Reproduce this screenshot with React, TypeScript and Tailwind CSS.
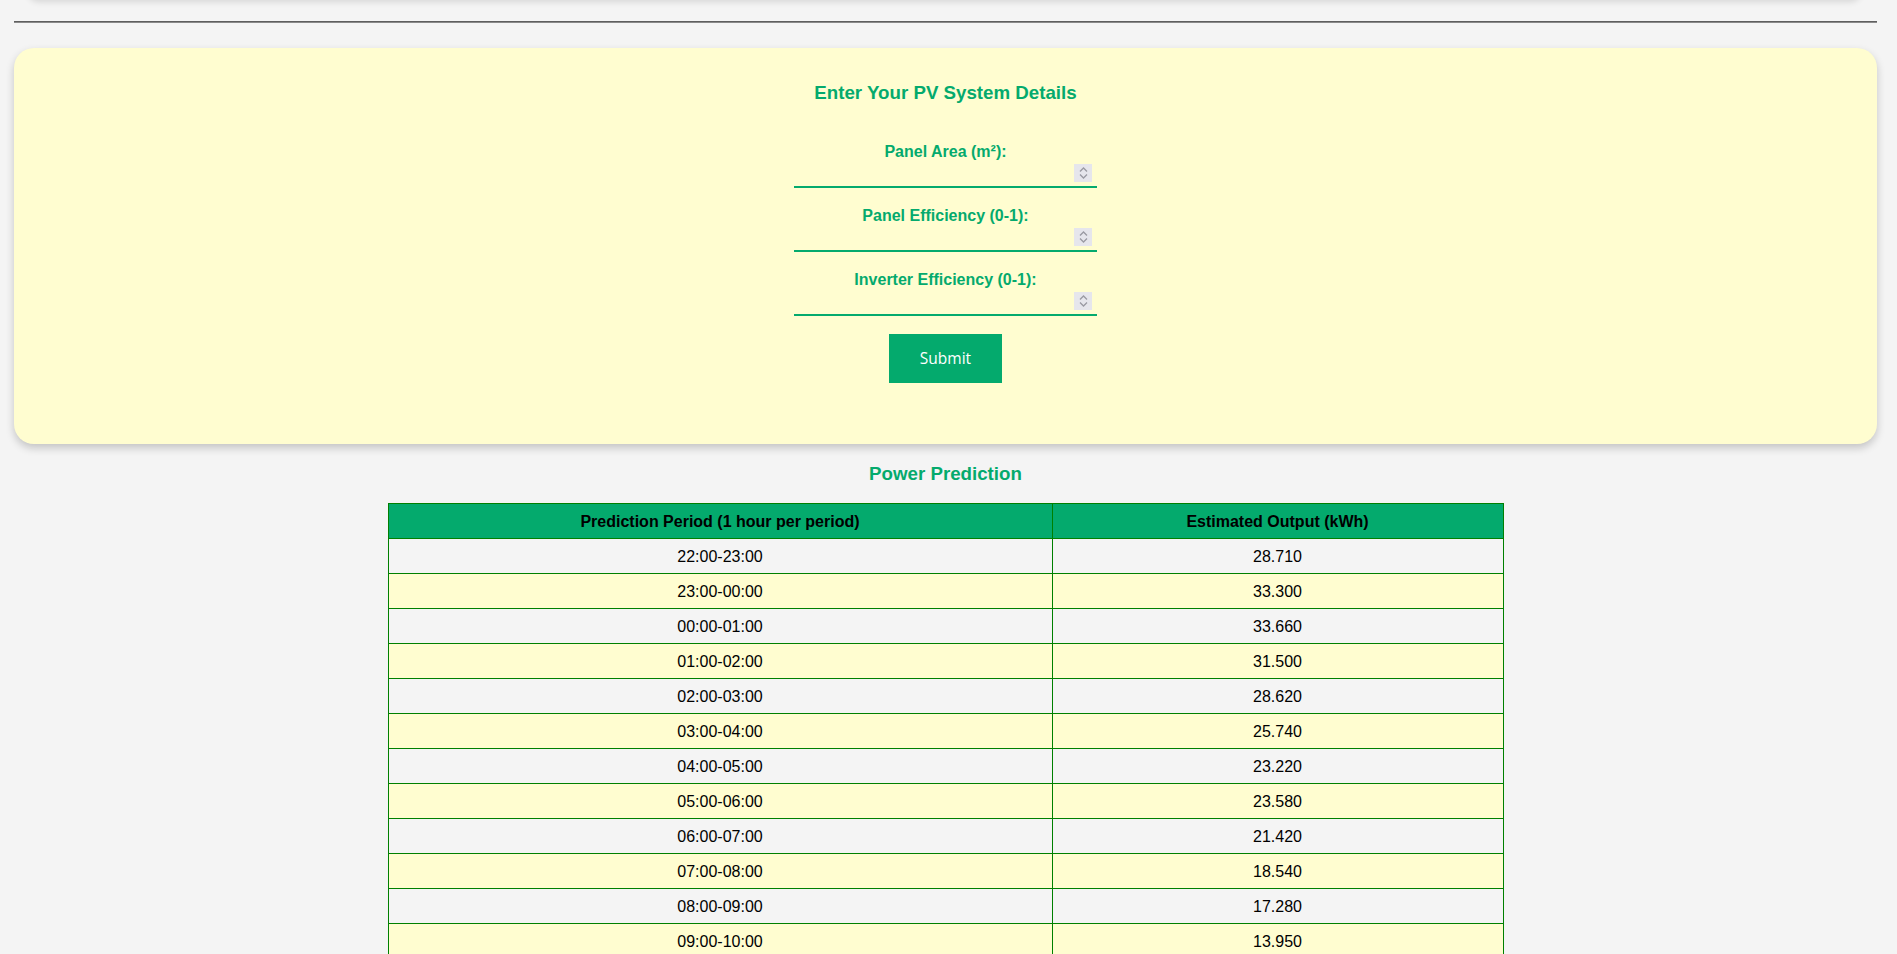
import React from 'react';

const rows: [string, string][] = [
  ['22:00-23:00', '28.710'],
  ['23:00-00:00', '33.300'],
  ['00:00-01:00', '33.660'],
  ['01:00-02:00', '31.500'],
  ['02:00-03:00', '28.620'],
  ['03:00-04:00', '25.740'],
  ['04:00-05:00', '23.220'],
  ['05:00-06:00', '23.580'],
  ['06:00-07:00', '21.420'],
  ['07:00-08:00', '18.540'],
  ['08:00-09:00', '17.280'],
  ['09:00-10:00', '13.950'],
  ['10:00-11:00', '12.060'],
  ['11:00-12:00', '10.980'],
  ['12:00-13:00', '9.720'],
  ['13:00-14:00', '8.910'],
];

const fields = ['Panel Area (m²):', 'Panel Efficiency (0-1):', 'Inverter Efficiency (0-1):'];

const Spinner: React.FC = () => (
  <div className="absolute right-[5px] top-[2px] w-[18px] h-[18px] bg-[#e6e6ec] flex flex-col items-center justify-center gap-[2px] pointer-events-none">
    <svg width="9" height="5" viewBox="0 0 9 5" fill="none" stroke="#9a9aa2" strokeWidth="1.3">
      <path d="M1 4.5L4.5 1L8 4.5" />
    </svg>
    <svg width="9" height="5" viewBox="0 0 9 5" fill="none" stroke="#9a9aa2" strokeWidth="1.3">
      <path d="M1 0.5L4.5 4L8 0.5" />
    </svg>
  </div>
);

export default function App() {
  return (
    <div className="min-h-screen bg-[#f4f4f4] font-['Liberation_Sans',Arial,sans-serif] overflow-hidden">
      {/* header card scrolled above viewport */}
      <div className="h-[100px] -mt-[100px] ml-[28px] mr-[36px] bg-white rounded-[10px] shadow-[0_2px_6px_rgba(0,0,0,0.12)]" />

      {/* hr */}
      <div className="mt-[21px] ml-[14px] mr-[20px] h-[2px] border-t border-t-[#5f5f5f] border-b border-b-[#8a8a8a]" />

      {/* Form card */}
      <div className="mt-[25px] ml-[14px] mr-[20px] rounded-[20px] bg-[#fffdd0] shadow-[0_4px_8px_rgba(0,0,0,0.2)] pt-[34px] pb-[61px] flex flex-col items-center">
        <h3 className="text-[18.72px] leading-[22px] font-bold text-[#04AA6D]">Enter Your PV System Details</h3>
        <form className="mt-[38px] w-[303px] flex flex-col items-center" onSubmit={(e) => e.preventDefault()}>
          {fields.map((f) => (
            <div key={f} className="w-full mb-[18px]">
              <label className="block pt-[1px] text-center text-[16px] leading-[18px] font-bold text-[#04AA6D]">{f}</label>
              <div className="relative mt-[1px] h-[26px] border-b-2 border-[#04AA6D]">
                <input
                  type="text"
                  className="w-full h-full bg-transparent outline-none border-none px-[4px] text-[16px]"
                />
                <Spinner />
              </div>
            </div>
          ))}
          <button
            type="submit"
            className="w-[113px] h-[49px] bg-[#04AA6D] text-white text-[15.5px] font-['Open_Sans',sans-serif]"
          >
            Submit
          </button>
        </form>
      </div>

      {/* Results */}
      <div className="ml-[14px] mr-[20px] flex flex-col items-center">
        <h3 className="mt-[19px] text-[18.72px] leading-[22px] font-bold text-[#04AA6D]">Power Prediction</h3>
        <table className="mt-[18px] w-[1116px] border-collapse text-[16px] leading-[18px] text-black">
          <thead>
            <tr className="bg-[#04AA6D]">
              <th className="w-[664px] border border-[#008000] pt-[9px] pb-[7px] font-bold">Prediction Period (1 hour per period)</th>
              <th className="border border-[#008000] pt-[9px] pb-[7px] font-bold">Estimated Output (kWh)</th>
            </tr>
          </thead>
          <tbody>
            {rows.map(([p, v], i) => (
              <tr key={p} className={i % 2 === 0 ? 'bg-[#f4f4f4]' : 'bg-[#fffdd0]'}>
                <td className="border border-[#008000] pt-[9px] pb-[7px] text-center">{p}</td>
                <td className="border border-[#008000] pt-[9px] pb-[7px] text-center">{v}</td>
              </tr>
            ))}
          </tbody>
        </table>
      </div>
    </div>
  );
}
